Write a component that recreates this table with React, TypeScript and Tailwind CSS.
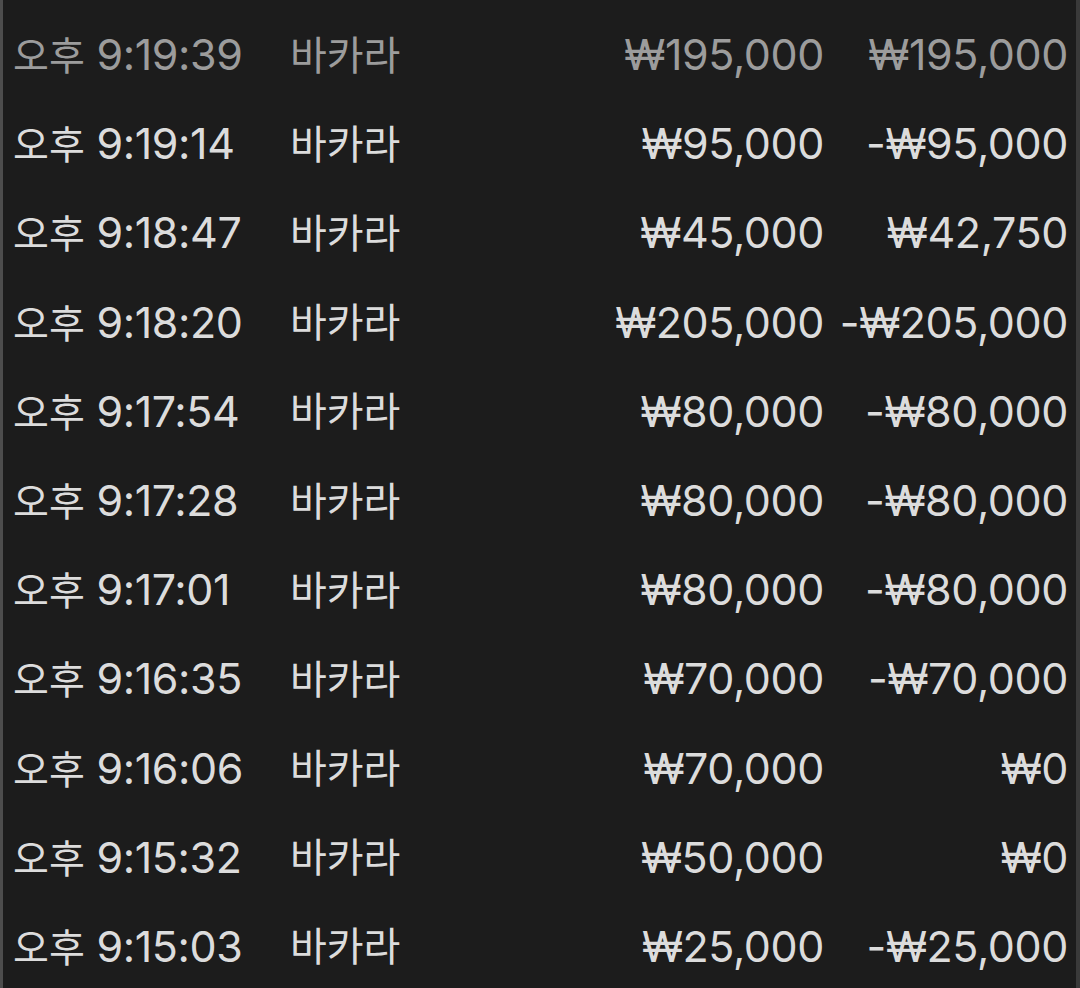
const rows = [
  { time: "9:19:39", bet: "₩195,000", result: "₩195,000" },
  { time: "9:19:14", bet: "₩95,000", result: "-₩95,000" },
  { time: "9:18:47", bet: "₩45,000", result: "₩42,750" },
  { time: "9:18:20", bet: "₩205,000", result: "-₩205,000" },
  { time: "9:17:54", bet: "₩80,000", result: "-₩80,000" },
  { time: "9:17:28", bet: "₩80,000", result: "-₩80,000" },
  { time: "9:17:01", bet: "₩80,000", result: "-₩80,000" },
  { time: "9:16:35", bet: "₩70,000", result: "-₩70,000" },
  { time: "9:16:06", bet: "₩70,000", result: "₩0" },
  { time: "9:15:32", bet: "₩50,000", result: "₩0" },
  { time: "9:15:03", bet: "₩25,000", result: "-₩25,000" },
];

const App = () => {
  return (
    <div className="h-[988px] w-[1080px] overflow-hidden bg-[#1c1c1c] border-l-[3px] border-l-[#4d4d4d] border-r-4 border-r-[#3a3a3a] pt-[10px] font-['Inter','Noto_Sans_CJK_KR',sans-serif]">
      {rows.map((row, i) => (
        <div
          key={row.time}
          className={`flex h-[89.2px] items-center text-[43px] leading-none tracking-[-0.4px] ${
            i === 0 ? "text-[#9c9c9c]" : "text-[#dcdcdc]"
          }`}
        >
          <div className="w-[287px] shrink-0 pl-[10px] whitespace-nowrap">
            <span className="font-['Noto_Sans_CJK_KR',sans-serif] text-[39px] tracking-normal">오후</span> {row.time}
          </div>
          <div className="w-[190px] shrink-0 pb-[4px] font-['Noto_Sans_CJK_KR',sans-serif] text-[40px] tracking-normal">
            바카라
          </div>
          <div className="w-[344px] shrink-0 text-right whitespace-nowrap">{row.bet}</div>
          <div className="w-[244px] shrink-0 text-right whitespace-nowrap">{row.result}</div>
        </div>
      ))}
    </div>
  );
};

export default App;
